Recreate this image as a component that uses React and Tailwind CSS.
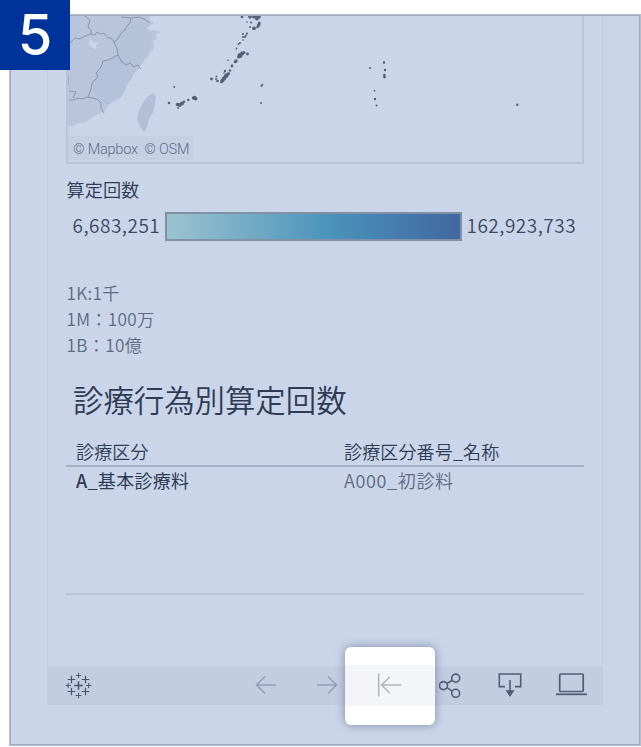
import React from 'react';

const islands = [
  // Amami and Okinawa
  [242, 17, 1.3], [250, 17, 1.8], [254, 16.5, 2], [257, 18, 2.2], [259, 17, 1.8], [257, 19.5, 1], [247, 22, 0.8], [251, 22.5, 1],
  [259.3, 23, 1.5], [258.7, 25, 1.8], [257.5, 27, 1.3], [254, 28.3, 1.9], [250, 27, 1], [247, 33.5, 1.1], [246, 35.5, 0.9], [243, 34, 1.1],
  [243, 37, 1.1], [245, 37, 1], [243, 40, 0.8], [240, 43, 1], [238.5, 44, 0.9], [236.5, 48.5, 0.9],
  [244, 52.5, 1.5], [242, 53.5, 2], [240, 55.5, 2.5], [238.5, 57, 1.5], [247.5, 54, 1.4], [236, 61, 1.7], [235, 62, 1.3],
  [228, 60.3, 0.8], [232, 66, 1.4], [230, 70.5, 1.2], [228.5, 73.5, 1.6], [226.5, 75.5, 2.2], [225, 77, 1.8], [224, 78.5, 2.1],
  [222.5, 80.5, 2], [221.5, 82, 1.4], [225, 71, 1.2], [224, 73, 0.8], [217.5, 81, 1.3], [216.5, 76.5, 0.9], [216, 79, 1],
  [211.5, 79, 1.4],
  // Sakishima
  [174.3, 87, 0.9], [169, 103, 1.3], [177.5, 104.5, 1.8], [179.5, 105, 2], [182, 103.5, 2], [184, 101.7, 1.2], [178, 108, 0.9],
  [188.3, 100, 1.2], [193.5, 98, 1.7], [195.5, 98.5, 1.9], [194.5, 97, 1.3],
  // Daito
  [261.5, 86, 1], [262.3, 84.8, 1], [261, 103, 1],
  // Ogasawara
  [370, 68, 1], [384, 62.5, 1.2], [385, 70, 1.2], [384.3, 75, 1.2], [384.5, 77, 1.4],
  [374.5, 90.7, 0.9], [375, 99, 1.2], [376.5, 105.5, 1], [517.3, 104.8, 1.2],
];

const Map = () => (
  <div className="relative h-[148px] w-[518px] overflow-hidden border-x-2 border-b-2 border-[#b8c4da]">
    <svg className="block" width="514" height="146" viewBox="68 16 514 146">
      <path
        d="M68 16H150L149 20L154 23L146 28L150 31L156 30L161 32L156 34L157 38L153 41L154 47L151 52L149 55L145 60L141 65L138 70L133 74L131 80L127 84L125 91L121 97L115 99L111 103L108 105L105 111L98 114L91 118L86 122L79 123L75 125L69 127L68 124Z"
        fill="#b8c5dc"
      />
      <path d="M126 20L149 24L146 29L153 33L151 43L147 55L136 68L121 62L114 42Z" fill="#b2c0d8" opacity=".65" />
      <path d="M103 62L118 56L137 69L129 82L120 98L108 105L97 97L91 84Z" fill="#b1bfd8" opacity=".7" />
      <path d="M90 37L93 42L99 43L96 45L96 50L92 47L89 44Z" fill="#cad5e9" />
      <path d="M153 93L156 96L155 104L153 112L149 119L147 127L144 132L141 128L137 120L138 113L142 104L147 97Z" fill="#b2bfd8" />
      <g fill="none" stroke="#8795b2" strokeWidth="1" strokeLinejoin="round">
        <path d="M85 16L90 20L88 27L91 30L91 34L85 36L80 39L75 38L71 42L68 43" />
        <path d="M91 34L95 35L97 32L101 34L104 33L108 38L111 38L114 42L118 39L121 33L125 30L127 26L131 22L130 18" />
        <path d="M121 17L132 18L139 17L144 19L150 23" />
        <path d="M114 42L117 49L118 55L108 60L103 61L101 67L96 73L98 77L92 83L91 89L88 97L82 99L79 98L73 100L69 100" />
        <path d="M118 55L122 62L126 65L130 63L134 67L138 65L141 69" />
        <path d="M88 97L97 99L101 103L101 108L104 113" />
        <path d="M68 76V85M69 91L76 92L73 98" />
      </g>
      <g fill="#526079">
        {islands.map(([x, y, r], i) => (
          <circle key={i} cx={x} cy={y} r={r} />
        ))}
      </g>
    </svg>
    <div className="absolute bottom-0.5 left-0 h-6 w-[126px] whitespace-pre bg-[#c6d0e5] pl-[5px] pt-0.5 font-['Roboto','Liberation_Sans',sans-serif] text-[14.5px] font-[350] leading-6 tracking-[-.23px] text-[#5e6b85]">
      © Mapbox  © OSM
    </div>
  </div>
);

const Legend = () => (
  <div className="mt-[9px] flex h-[29px] items-center whitespace-nowrap text-[19px] leading-[25px] text-[#3b4862]">
    <span className="-mt-[4px] w-[99px] pl-[6.5px] font-[350] tracking-[.5px]">6,683,251</span>
    <div className="h-[29px] w-[297px] border-2 border-[#8090a5] bg-linear-to-r from-[#9bc3cf] via-[#4a93bb] via-55% to-[#41689f]" />
    <span className="-mt-[4px] pl-[4.5px] font-[350] tracking-[.5px]">162,923,733</span>
  </div>
);

const Plus = ({ x, y, r, w = 1.2 }) => (
  <path d={`M${x - r} ${y}H${x + r}M${x} ${y - r}V${y + r}`} strokeWidth={w} />
);

const TableauLogo = () => (
  <svg width="28" height="28" viewBox="0 0 28 28" stroke="#46546d" className="block">
    <Plus x={14.5} y={14.5} r={4.3} w={1.5} />
    <Plus x={7.5} y={8.5} r={3.8} />
    <Plus x={21.5} y={8.5} r={3.8} />
    <Plus x={7.5} y={20.5} r={3.8} />
    <Plus x={21.5} y={20.5} r={3.8} />
    <Plus x={14.5} y={4.5} r={2.6} w={1} />
    <Plus x={14.5} y={24.5} r={2.8} w={1} />
    <Plus x={4.2} y={14.5} r={2.6} w={1} />
    <Plus x={24.7} y={14.5} r={2.6} w={1} />
  </svg>
);

const ArrowIcon = ({ flip }) => (
  <svg width="22" height="20" viewBox="0 0 22 20" fill="none" stroke="#919eb8" strokeWidth="1.5" className={flip ? 'block -scale-x-100' : 'block'}>
    <path d="M21 10H1.5M10 1.5L1.5 10L10 18.5" />
  </svg>
);

const ShareIcon = () => (
  <svg width="24" height="28" viewBox="0 0 24 28" fill="none" stroke="#505d76" strokeWidth="1.6" className="block">
    <circle cx="4.5" cy="14.6" r="4" />
    <circle cx="16.7" cy="7.1" r="4" />
    <circle cx="16.7" cy="22.3" r="4" />
    <path d="M7.9 12.5L13.3 9.2M7.9 16.7L13.3 20.2" />
  </svg>
);

const DownloadIcon = () => (
  <svg width="24" height="28" viewBox="0 0 24 28" fill="none" stroke="#505d76" strokeWidth="1.6" className="block">
    <path d="M7 15.6H1.3V3H22.7V15.6H17M12 9V20" />
    <path d="M7.5 19.3H16.5L12 26Z" fill="#505d76" stroke="none" />
  </svg>
);

const DeviceIcon = () => (
  <svg width="31" height="28" viewBox="0 0 31 28" fill="none" stroke="#505d76" strokeWidth="1.7" className="block">
    <rect x="3.7" y="3" width="23.5" height="17.5" rx="1" />
    <path d="M0 23.3H31" strokeWidth="1.8" />
  </svg>
);

const Toolbar = () => (
  <div className="flex h-[39px] items-center bg-[#c3cde1] pb-px pl-[17px]">
    <TableauLogo />
    <div className="ml-[163px]"><ArrowIcon /></div>
    <div className="ml-[39px]"><ArrowIcon flip /></div>
    <div className="ml-[101px]"><ShareIcon /></div>
    <div className="ml-[35px]"><DownloadIcon /></div>
    <div className="ml-[34px]"><DeviceIcon /></div>
  </div>
);

const ResetHighlight = () => (
  <div className="absolute left-[345px] top-[647px] h-[78px] w-[90px] rounded-md bg-white pt-[18px] shadow-[0_0_10px_rgba(50,65,105,0.5)]">
    <div className="flex h-[41px] items-center justify-center bg-[#f4f5f8]">
      <svg width="26" height="26" viewBox="0 0 26 26" fill="none" stroke="#b5b5b6" strokeWidth="1.5" className="block">
        <path d="M1.7 0.5V23.5M24.5 12H4.5M12.8 4L4.5 12L12.8 20" />
      </svg>
    </div>
  </div>
);

const App = () => {
  return (
    <div className="relative h-[747px] w-[641px] overflow-hidden bg-white pl-[9px] pt-[14px] font-['Noto_Sans_CJK_JP',sans-serif]">
      <div className="h-[732px] w-[632px] border border-[#b7bdc9]">
        <div className="h-[730px] border border-[#9dabc7] bg-[#cad5e9] pl-9">
          <div className="flex h-[689px] w-[556px] flex-col">
            <div className="h-[650px] border-x border-[#c2cde1] pl-[18px]">
              <Map />
              <div className="w-[518px]">
                <div className="mt-[12px] h-[27px] pl-[.5px] text-[18.2px] font-[350] leading-[26px] text-[#2e3b54]">算定回数</div>
                <Legend />
                <div className="mt-[39px] h-[78px] pl-[.5px] text-[17.2px] font-[350] leading-[26px] tracking-[.3px] text-[#5d6982]">
                  <p>1K:1千</p>
                  <p>1M：100万</p>
                  <p>1B：10億</p>
                </div>
                <h2 className="mt-[18px] h-[48px] pl-[7px] text-[30.4px] font-[350] leading-[46px] text-[#2e3b54]">
                  診療行為別算定回数
                </h2>
                <div className="mt-[14px] flex h-[29px] border-b-2 border-[#a5b2ca] pl-[10px] text-[18px] font-[350] leading-[27px] tracking-[.15px] text-[#2e3b54]">
                  <span className="w-[268px]">診療区分</span>
                  <span>診療区分番号_名称</span>
                </div>
                <div className="flex h-[128px] border-b-2 border-[#b8c4da] pl-[10px] text-[18px] leading-[27px]">
                  <span className="w-[268px] tracking-[.3px] text-[#2e3b54]">
                    <span className="font-medium">A</span>_基本診療料
                  </span>
                  <span className="font-[350] tracking-[.65px] text-[#5d6982]">A000_初診料</span>
                </div>
              </div>
            </div>
            <Toolbar />
          </div>
        </div>
      </div>
      <div className="absolute left-0 top-0 flex h-[70px] w-[70px] items-center justify-center bg-[#003399] font-['Inter',sans-serif] text-[56px] font-medium leading-[70px] text-white">
        5
      </div>
      <ResetHighlight />
    </div>
  );
};

export default App;
